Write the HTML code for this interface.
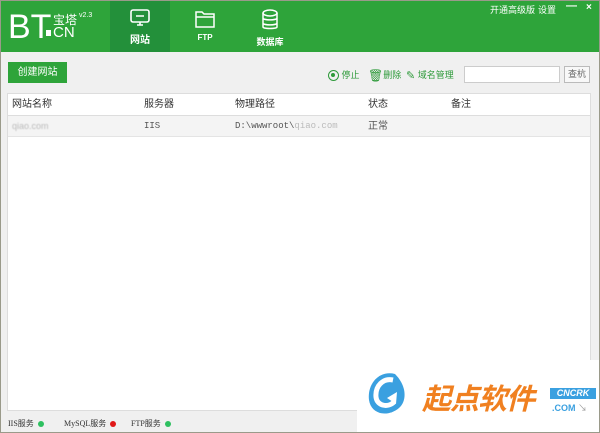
<!DOCTYPE html>
<html><head><meta charset="utf-8"><style>
*{margin:0;padding:0;box-sizing:border-box}
body{width:600px;height:433px;overflow:hidden;background:#f0f0f0;font-family:"Liberation Sans","Noto Sans CJK SC",sans-serif;position:relative}
.frame{position:absolute;left:0;top:0;width:600px;height:433px;border:1px solid #9a9a8a;pointer-events:none}
.hdr{position:absolute;left:0;top:0;width:600px;height:52px;background:#2ea43a}
.lg{position:absolute;color:#fff;white-space:nowrap;line-height:1}
.tab{position:absolute;top:0;height:52px;width:60px;color:#fff;text-align:center;font-size:10px;font-weight:bold}
.tab svg{display:block;margin:9px auto 4px}
.tr{position:absolute;top:3px;color:#fff;font-size:9px}
.btn{position:absolute;left:8px;top:62px;width:59px;height:21px;background:#2ea43a;color:#fff;font-size:10px;line-height:21px;text-align:center}
.tool{position:absolute;top:68px;font-size:9px;color:#2e9a3a}
.search{position:absolute;left:464px;top:66px;width:96px;height:17px;background:#fff;border:1px solid #ccc}
.sbtn{position:absolute;left:564px;top:66px;width:26px;height:17px;background:#f8f8f8;border:1px solid #bbb;font-size:9px;color:#666;text-align:center;line-height:15px}
.tbl{position:absolute;left:7px;top:93px;width:584px;height:318px;background:#fff;border:1px solid #ddd}
.th{position:absolute;left:0;top:0;width:100%;height:22px;border-bottom:1px solid #ddd;font-size:10px;color:#333}
.row{position:absolute;left:0;top:22px;width:100%;height:21px;background:#f4f4f4;border-bottom:1px solid #e4e4e4;font-size:9px;color:#555}
.c{position:absolute;top:4px;line-height:13px;height:13px;white-space:nowrap}
.stat{position:absolute;top:418px;font-size:8px;color:#333;font-family:"Liberation Serif","Noto Sans CJK SC",serif}
.dot{display:inline-block;width:6px;height:6px;border-radius:50%;margin-left:4px;vertical-align:middle}
</style></head><body>
<div class="hdr">
 <div class="lg" style="left:8px;top:10px;font-size:34px">BT</div>
 <div class="lg" style="left:46px;top:30px;width:5px;height:6px;background:#fff"></div>
 <div class="lg" style="left:53px;top:14px;font-size:12px">宝塔</div>
 <div class="lg" style="left:79px;top:12px;font-size:7px">v2.3</div>
 <div class="lg" style="left:53px;top:25px;font-size:15px">CN</div>
 <div class="tab" style="left:110px;background:#23903a"><svg width="22" height="18" viewBox="0 0 22 18" fill="none" stroke="#fff" stroke-width="1.6"><rect x="2" y="1" width="18" height="12" rx="2"/><path d="M7 7h8M8 16h6M11 13v3"/></svg>网站</div>
 <div class="tab" style="left:175px;font-size:8px"><svg width="22" height="20" viewBox="0 0 22 20" fill="none" stroke="#fff" stroke-width="1.5"><path d="M2 3h6l2 2h10v13H2z M2 8h18"/></svg>FTP</div>
 <div class="tab" style="left:240px;font-size:9px"><svg width="20" height="22" viewBox="0 0 20 22" fill="none" stroke="#fff" stroke-width="1.5"><ellipse cx="10" cy="4" rx="7" ry="3"/><path d="M3 4v14c0 2 14 2 14 0V4M3 9c0 2.5 14 2.5 14 0M3 14c0 2.5 14 2.5 14 0"/></svg>数据库</div>
 <div class="tr" style="left:490px">开通高级版</div>
 <div class="tr" style="left:538px">设置</div>
 <div class="tr" style="left:566px;top:0;font-size:11px;font-weight:bold">—</div>
 <div class="tr" style="left:586px;top:2px;font-size:10px;font-weight:bold">×</div>
</div>
<div class="btn">创建网站</div>
<div class="tool" style="left:328px"><span style="display:inline-block;width:11px;height:11px;border:1.5px solid #2e9a3a;border-radius:50%;vertical-align:middle;position:relative"><span style="position:absolute;left:2px;top:2px;width:4px;height:4px;background:#2e9a3a;border-radius:50%"></span></span> 停止</div>
<div class="tool" style="left:368px"><span style="font-size:12px;vertical-align:middle">🗑</span>删除</div>
<div class="tool" style="left:406px"><span style="font-size:11px;vertical-align:middle">✎</span> 域名管理</div>
<div class="search"></div><div class="sbtn">查杭</div>
<div class="tbl">
 <div class="th"><span class="c" style="left:4px">网站名称</span><span class="c" style="left:136px">服务器</span><span class="c" style="left:227px">物理路径</span><span class="c" style="left:360px">状态</span><span class="c" style="left:443px">备注</span></div>
 <div class="row"><span class="c" style="left:4px;color:#bbb;filter:blur(.6px)">qiao.com</span><span class="c" style="left:136px;font-family:'Liberation Mono',monospace">IIS</span><span class="c" style="left:227px;font-family:'Liberation Mono',monospace">D:\wwwroot\<span style="color:#bbb">qiao.com</span></span><span class="c" style="left:360px;font-size:10px">正常</span></div>
</div>
<div class="stat" style="left:8px">IIS服务<span class="dot" style="background:#2ec060"></span></div>
<div class="stat" style="left:64px">MySQL服务<span class="dot" style="background:#e01818"></span></div>
<div class="stat" style="left:131px">FTP服务<span class="dot" style="background:#2ec060"></span></div>
<div style="position:absolute;left:357px;top:360px;width:243px;height:73px;background:#fff"></div>
<svg style="position:absolute;left:365px;top:370px" width="44" height="48" viewBox="0 0 44 48"><path d="M30 4C14 0 2 14 4 30c2 14 18 18 30 8 8-7 8-22-4-34z" fill="#3aa0e0"/><path d="M28 10C18 8 10 16 11 27c1 9 12 11 18 5" fill="none" stroke="#fff" stroke-width="5"/><path d="M22 28l10-6-1 12z" fill="#fff"/></svg>
<div style="position:absolute;left:422px;top:376px;font-size:29px;font-weight:bold;font-style:italic;color:#f08020;letter-spacing:-1px">起点软件</div>
<div style="position:absolute;left:550px;top:388px;width:46px;height:11px;background:#3aa0e0;color:#fff;font-size:9px;font-weight:bold;font-style:italic;line-height:11px;text-align:center">CNCRK</div>
<div style="position:absolute;left:552px;top:401px;font-size:9px;color:#3aa0e0;font-weight:bold">.COM <span style="color:#999;font-weight:normal">↘</span></div>
<div class="frame"></div>
</body></html>
